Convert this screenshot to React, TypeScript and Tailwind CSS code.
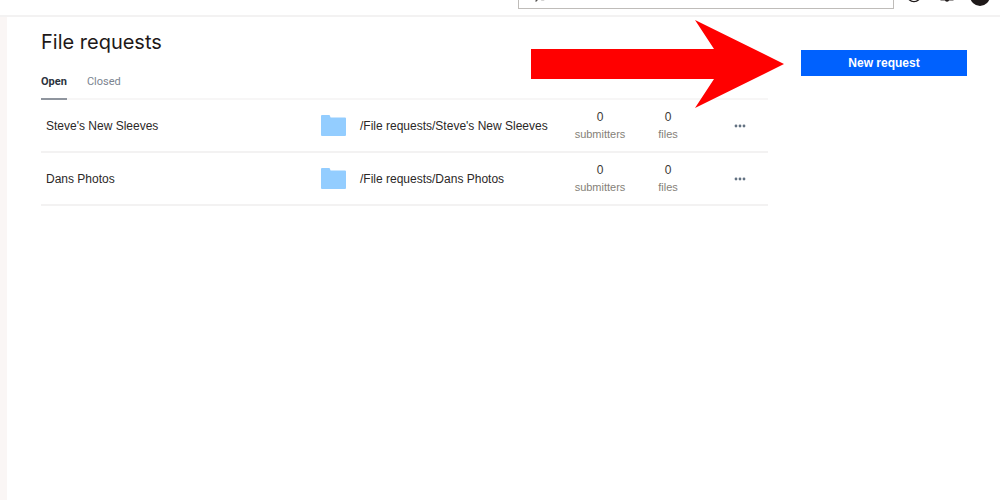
import { CircleHelp, Search } from 'lucide-react';

interface FileRequest {
  name: string;
  path: string;
  submitters: number;
  files: number;
}

const requests: FileRequest[] = [
  { name: "Steve's New Sleeves", path: "/File requests/Steve's New Sleeves", submitters: 0, files: 0 },
  { name: 'Dans Photos', path: '/File requests/Dans Photos', submitters: 0, files: 0 },
];

function FolderIcon() {
  return (
    <svg viewBox="0 0 25 21" className="w-[25px] h-[21px] shrink-0" fill="#93cdff" aria-hidden="true">
      <path d="M0 1a1 1 0 0 1 1-1h7a1 1 0 0 1 1 1l.6 1.4H24a1 1 0 0 1 1 1V20a1 1 0 0 1-1 1H1a1 1 0 0 1-1-1z" />
    </svg>
  );
}

function BellIcon() {
  return (
    <svg viewBox="0 0 16 16" className="w-4 h-4" aria-hidden="true">
      <path d="M3.5 13.5V7a4.5 4.5 0 0 1 9 0v6.5M1.5 13.7h13" fill="none" stroke="#3a3535" strokeWidth="1.4" />
      <path d="M6 14h4a2 1.8 0 0 1-4 0z" fill="#1e1919" />
    </svg>
  );
}

function TopBar() {
  return (
    <header className="h-[17px] overflow-hidden border-b-2 border-[#f3f2f2] flex items-end justify-end">
      <div className="flex items-end shrink-0 pb-[6px] pr-[10px]">
        <label className="w-94 h-7 border border-[#bfbcb9] flex items-center px-[15px]">
          <Search className="w-4 h-4 -scale-x-100 text-[#52504e]" />
          <input type="search" aria-label="Search" className="flex-1 min-w-0 text-xs outline-none" />
        </label>
        <button aria-label="Help" className="ml-[12px] mb-[6px]">
          <CircleHelp className="w-4 h-4 text-[#1e1919]" />
        </button>
        <button aria-label="Notifications" className="ml-[17px] mb-[7px]">
          <BellIcon />
        </button>
        <button aria-label="Account" className="ml-[15px] mb-[3px] w-5 h-5 rounded-full bg-[#1e1919]" />
      </div>
    </header>
  );
}

function Count({ value, label }: { value: number; label: string }) {
  return (
    <td className="w-[68px] p-0 text-center">
      <div className="text-xs leading-[17px] text-[#3b3836]">{value}</div>
      <div className="text-[11px] leading-[17px] text-[#857f78]">{label}</div>
    </td>
  );
}

function RequestRow({ request }: { request: FileRequest }) {
  return (
    <tr className="h-[53px] *:border-b-2 *:border-[#f3f2f2]">
      <td className="p-0 pl-[5px]">{request.name}</td>
      <td className="w-[245px] p-0">
        <div className="flex items-center gap-[14px] whitespace-nowrap">
          <FolderIcon />
          {request.path}
        </div>
      </td>
      <Count value={request.submitters} label="submitters" />
      <Count value={request.files} label="files" />
      <td className="w-[66px] p-0 pl-[10px] text-center">
        <button aria-label={`More options for ${request.name}`} className="align-middle">
          <svg viewBox="0 0 12 4" className="w-3 h-1" fill="#637282" aria-hidden="true">
            <circle cx="2" cy="2" r="1.4" />
            <circle cx="6" cy="2" r="1.4" />
            <circle cx="10" cy="2" r="1.4" />
          </svg>
        </button>
      </td>
    </tr>
  );
}

export default function App() {
  return (
    <div className="min-h-screen bg-white flex flex-col font-['Liberation_Sans',sans-serif] text-xs text-[#2b2827]">
      <TopBar />
      <div className="flex-1 flex relative">
        {/* Sidebar edge */}
        <div className="w-[7px] bg-[#faf6f5]" />

        <main className="flex-1 min-w-0 pl-[34px] pr-[33px] pt-[13px]">
          <h1 className="font-['Inter',sans-serif] text-xl leading-6 text-[#1e1919]">File requests</h1>
          <div
            role="tablist"
            className="mt-4 flex gap-5 font-['Roboto',sans-serif] text-[11px] border-b-2 border-[#f7f6f6]"
          >
            <button
              role="tab"
              aria-selected="true"
              className="h-[30px] pb-1 -mb-[2px] border-b-2 border-[#8f959e] font-bold text-[#2b333d]"
            >
              Open
            </button>
            <button
              role="tab"
              aria-selected="false"
              className="h-[30px] pb-1 -mb-[2px] border-b-2 border-transparent text-[#7b8490]"
            >
              Closed
            </button>
          </div>
          <table className="w-full border-separate border-spacing-0">
            <tbody>
              {requests.map((request) => (
                <RequestRow key={request.name} request={request} />
              ))}
            </tbody>
          </table>
        </main>

        <aside className="w-[166px] mr-[33px] pt-[33px]">
          <button className="w-full h-[26px] bg-[#0061fe] text-white font-bold">New request</button>
        </aside>

        {/* Arrow pointing at the button */}
        <svg
          viewBox="0 0 254 88"
          className="absolute top-[3px] right-[216px] w-[254px] h-[88px]"
          fill="#ff0000"
          aria-hidden="true"
        >
          <polygon points="1,29 184,29 165,0 254,44 165,88 184,59 1,59" />
        </svg>
      </div>
    </div>
  );
}
